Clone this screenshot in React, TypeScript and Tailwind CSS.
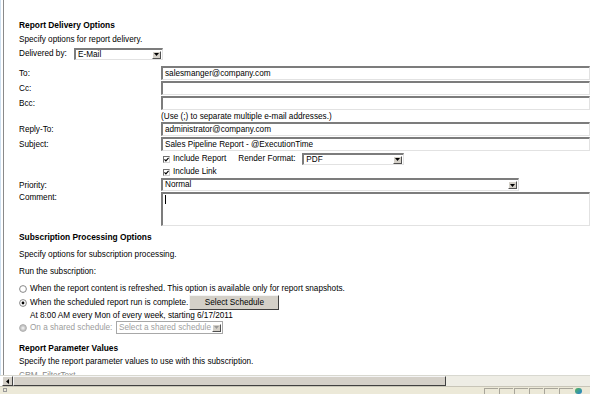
import React from "react";

const box =
  "box-border bg-white border-t-2 border-l-2 border-b border-r border-t-[#7c7c7c] border-l-[#7c7c7c] border-b-[#e2e2e2] border-r-[#e2e2e2] flex items-center pl-[2px] overflow-hidden whitespace-nowrap";

function Arrow({ disabled }: { disabled?: boolean }) {
  return (
    <div className="ml-auto mr-[1px] w-[9px] h-[8px] shrink-0 bg-[#d4d0c8] border border-t-white border-l-white border-b-[#505050] border-r-[#505050] flex items-center justify-center">
      <svg width="5" height="3" viewBox="0 0 5 3">
        <path d="M0 0H5L2.5 3Z" fill={disabled ? "#9a9a9a" : "#000"} />
      </svg>
    </div>
  );
}

function Check() {
  return (
    <div className="w-[7px] h-[7px] shrink-0 box-border border border-t-[#707070] border-l-[#707070] border-b-[#d0d0d0] border-r-[#d0d0d0] bg-white flex items-center justify-center">
      <svg width="5" height="5" viewBox="0 0 5 5">
        <path d="M0.5 2.3L1.9 3.8L4.6 0.8" stroke="#000" strokeWidth="1.2" fill="none" />
      </svg>
    </div>
  );
}

function Radio({ checked, disabled }: { checked?: boolean; disabled?: boolean }) {
  return (
    <svg width="8" height="8" viewBox="0 0 8 8" className="shrink-0">
      <circle cx="4" cy="4" r="3.4" fill={disabled ? "#c8c8c8" : "#fff"} stroke={disabled ? "#a8a8a8" : "#7a7a7a"} strokeWidth="0.9" />
      {checked && <circle cx="4" cy="4" r="1.4" fill="#000" />}
      {disabled && <circle cx="4" cy="4" r="1.6" fill="#e8e8e8" />}
    </svg>
  );
}

function Row({ label, children, h = "h-[15px]" }: { label: string; children: React.ReactNode; h?: string }) {
  return (
    <div className={`flex items-start ${h}`}>
      <div className="w-[142px] shrink-0 leading-[15px]">{label}</div>
      {children}
    </div>
  );
}

export default function App() {
  return (
    <div className="w-[590px] h-[394px] overflow-hidden bg-white flex flex-col font-['Liberation_Sans',Arial,sans-serif] text-[8.2px] text-black">
      <div className="flex h-[377px] overflow-hidden">
        <div className="w-[1px] bg-[#cfe0f0] shrink-0" />
        <div className="w-[2px] shrink-0" />
        <div className="w-[1px] bg-[#8a8a8a] shrink-0" />
        <div className="pl-[15px] pt-[19px] flex flex-col min-w-0 flex-1">
          <div className="h-[12px] leading-[12px] font-bold text-[8.4px]">Report Delivery Options</div>
          <div className="mt-[3px] h-[12px] leading-[12px]">Specify options for report delivery.</div>
          <div className="mt-[2px] h-[13px] flex items-center">
            <span className="w-[55px] shrink-0">Delivered by:</span>
            <div className={`${box} w-[89px] h-[12px]`}>
              <span>E-Mail</span>
              <Arrow />
            </div>
          </div>

          <div className="mt-[6px]">
            <Row label="To:">
              <div className={`${box} w-[500px] h-[14px]`}>salesmanger@company.com</div>
            </Row>
            <Row label="Cc:">
              <div className={`${box} w-[500px] h-[14px]`} />
            </Row>
            <Row label="Bcc:">
              <div className={`${box} w-[500px] h-[14px]`} />
            </Row>
            <div className="h-[11px] flex items-center pl-[142px] whitespace-nowrap">
              (Use (;) to separate multiple e-mail addresses.)
            </div>
            <Row label="Reply-To:">
              <div className={`${box} w-[500px] h-[14px]`}>administrator@company.com</div>
            </Row>
            <Row label="Subject:">
              <div className={`${box} w-[500px] h-[14px]`}>Sales Pipeline Report - @ExecutionTime</div>
            </Row>
            <div className="h-[14px] flex items-center pl-[144px] whitespace-nowrap">
              <Check />
              <span className="ml-[3px]">Include Report</span>
              <span className="ml-[12px] w-[64px]">Render Format:</span>
              <div className={`${box} w-[102px] h-[12px]`}>
                <span>PDF</span>
                <Arrow />
              </div>
            </div>
            <div className="h-[12px] flex items-center pl-[144px]">
              <Check />
              <span className="ml-[3px]">Include Link</span>
            </div>
            <Row label="Priority:" h="h-[14px]">
              <div className={`${box} w-[358px] h-[13px]`}>
                <span>Normal</span>
                <Arrow />
              </div>
            </Row>
            <div className="flex items-start h-[34px]">
              <div className="w-[142px] shrink-0 leading-[11px]">Comment:</div>
              <div className={`${box} w-[500px] h-[34px] items-start`}>
                <div className="w-[1px] h-[9px] bg-black mt-[1px]" />
              </div>
            </div>
          </div>

          <div className="mt-[5px] h-[12px] leading-[12px] font-bold text-[8.4px]">Subscription Processing Options</div>
          <div className="mt-[6px] h-[12px] leading-[12px]">Specify options for subscription processing.</div>
          <div className="mt-[5px] h-[12px] leading-[12px]">Run the subscription:</div>
          <div className="mt-[5px] h-[12px] flex items-center whitespace-nowrap">
            <Radio />
            <span className="ml-[3px]">When the report content is refreshed. This option is available only for report snapshots.</span>
          </div>
          <div className="h-[15px] flex items-center whitespace-nowrap">
            <Radio checked />
            <span className="ml-[3px]">When the scheduled report run is complete.</span>
            <div className="ml-[1px] w-[90px] h-[15px] box-border bg-[#d4d0c8] border border-t-[#f4f4f4] border-l-[#f4f4f4] border-b-[#404040] border-r-[#404040] flex items-center justify-center">
              Select Schedule
            </div>
          </div>
          <div className="h-[11px] flex items-center pl-[11px] whitespace-nowrap">
            At 8:00 AM every Mon of every week, starting 6/17/2011
          </div>
          <div className="h-[13px] flex items-center whitespace-nowrap">
            <Radio disabled />
            <span className="ml-[3px] text-[#9c9c9c] w-[86px]">On a shared schedule:</span>
            <div className="box-border bg-white border border-[#a8a8a8] flex items-center pl-[2px] w-[107px] h-[13px] text-[#a0a0a0]">
              <span>Select a shared schedule</span>
              <Arrow disabled />
            </div>
          </div>
          <div className="mt-[8px] h-[12px] leading-[12px] font-bold text-[8.4px]">Report Parameter Values</div>
          <div className="mt-[2px] h-[12px] leading-[12px]">Specify the report parameter values to use with this subscription.</div>
          <div className="mt-[2px] h-[12px] leading-[12px] text-[#8a8a8a] shrink-0">CRM_FilterText</div>
        </div>
      </div>

      <div className="h-[11px] flex bg-[#eeede5] border-t border-[#d8d8d0]">
        <div className="w-[2px] bg-white shrink-0" />
        <div className="w-[11px] h-full box-border bg-[#d4d0c8] border border-t-white border-l-white border-b-[#404040] border-r-[#404040] flex items-center justify-center shrink-0">
          <svg width="3" height="5" viewBox="0 0 3 5">
            <path d="M3 0V5L0 2.5Z" fill="#000" />
          </svg>
        </div>
        <div className="w-[433px] h-full box-border bg-[#d4d0c8] border border-t-[#f4f4f4] border-l-[#f4f4f4] border-b-[#404040] border-r-[#404040] shrink-0" />
      </div>

      <div className="flex-1 bg-[#ece9d8] border-t border-[#c8c5b8] flex items-start">
        <div className="ml-[3px] mt-[1px] w-[4px] h-[4px] border border-[#9a9a9a]" />
        <div className="ml-auto flex mr-[8px]">
          {[0, 1, 2, 3, 4, 5].map((i) => (
            <div key={i} className="w-[14px] h-[6px] mt-[1px] ml-[1px] border-t border-l border-[#a8a59a]" />
          ))}
          <div className="ml-[2px] mt-[1px] w-[7px] h-[6px] rounded-full bg-gradient-to-br from-[#5ab04a] to-[#2a7fd0]" />
        </div>
      </div>
    </div>
  );
}
